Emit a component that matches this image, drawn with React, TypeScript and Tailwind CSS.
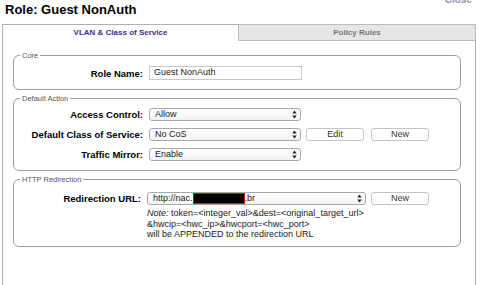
import type { ReactNode } from "react";

function Arrows() {
  return (
    <svg width="5" height="9" viewBox="0 0 5 9" className="shrink-0">
      <path d="M0.3 3.6 L2.5 0.6 L4.7 3.6 Z" fill="#222" />
      <path d="M0.3 5.4 L2.5 8.4 L4.7 5.4 Z" fill="#222" />
    </svg>
  );
}

function Select({ children, className = "w-[152px]" }: { children: ReactNode; className?: string }) {
  return (
    <div
      className={`${className} h-[13px] flex items-center justify-between border border-[#a8a8a8] rounded-[3px] bg-gradient-to-b from-white to-[#f3f3f3] pl-[5px] pr-[3px] text-[9px] leading-[11px] text-[#222]`}
    >
      <span className="flex items-center whitespace-nowrap">{children}</span>
      <Arrows />
    </div>
  );
}

function Button({ label }: { label: string }) {
  return (
    <div className="w-[58px] h-[13px] flex items-center justify-center border border-[#c4c4c4] rounded-[3px] bg-white text-[9px] text-[#333]">
      {label}
    </div>
  );
}

function Label({ children }: { children: ReactNode }) {
  return <div className="text-right font-bold text-[9.5px] leading-[13px] text-black whitespace-nowrap">{children}</div>;
}

function Group({ title, className = "", children }: { title: string; className?: string; children: ReactNode }) {
  return (
    <fieldset className={`border border-[#9c9c9c] rounded-[6px] ${className}`}>
      <legend className="ml-[6px] px-[2px] text-[7.5px] leading-[9px] text-[#555]">{title}</legend>
      {children}
    </fieldset>
  );
}

export default function App() {
  return (
    <div className="w-[490px] h-[285px] overflow-hidden bg-white flex flex-col font-['Liberation_Sans',Arial,sans-serif]">
      <div className="flex justify-between pl-[5px] pt-[2px] pr-[18px]">
        <h1 className="text-[13px] leading-[16px] font-bold text-black">Role: Guest NonAuth</h1>
        <span className="-mt-[7px] text-[10px] leading-[10px] font-bold text-[#8d95ad]">Close</span>
      </div>

      <div className="mt-[6px] ml-[2px] w-[474px] flex">
        <div className="w-[236px] h-[17px] border-t border-l border-[#b0b0b0] bg-white flex items-center justify-center text-[8px] font-bold text-[#3f2b8f]">
          VLAN &amp; Class of Service
        </div>
        <div className="flex-1 h-[17px] border border-[#bcbcbc] bg-[#e6e6e6] flex items-center justify-center text-[8px] font-bold text-[#777]">
          Policy Rules
        </div>
      </div>

      <div className="ml-[2px] w-[474px] flex-1 border-l border-r border-[#b0b0b0] pl-[10px] pr-[14px] pt-[10px] flex flex-col gap-[4px]">
        <Group title="Core" className="pt-[6px] pb-[9px]">
          <div className="grid grid-cols-[129px_1fr] gap-x-[6px] items-center">
            <Label>Role Name:</Label>
            <div className="w-[153px] h-[14px] border border-[#c8c8c8] flex items-center pl-[4px] text-[9px] text-[#222]">
              Guest NonAuth
            </div>
          </div>
        </Group>

        <Group title="Default Action" className="pt-[5px] pb-[9px]">
          <div className="grid grid-cols-[129px_1fr] gap-x-[6px] gap-y-[7px] items-center">
            <Label>Access Control:</Label>
            <Select>Allow</Select>
            <Label>Default Class of Service:</Label>
            <div className="flex items-center">
              <Select>No CoS</Select>
              <div className="ml-[5px]">
                <Button label="Edit" />
              </div>
              <div className="ml-[7px]">
                <Button label="New" />
              </div>
            </div>
            <Label>Traffic Mirror:</Label>
            <Select>Enable</Select>
          </div>
        </Group>

        <Group title="HTTP Redirection" className="pt-[8px] pb-[6px]">
          <div className="grid grid-cols-[127px_1fr] gap-x-[6px] items-center">
            <Label>Redirection URL:</Label>
            <div className="flex items-center">
              <Select className="w-[219px]">
                http://nac.
                <span className="inline-block w-[52px] h-[11px] bg-black border border-[#e01010]" />
                .br
              </Select>
              <div className="ml-[5px]">
                <Button label="New" />
              </div>
            </div>
            <div className="col-start-2 mt-[3px] text-[9px] leading-[10.5px] text-[#222]">
              <div>
                <i>Note:</i> token=&lt;integer_val&gt;&amp;dest=&lt;original_target_url&gt;
              </div>
              <div>&amp;hwcip=&lt;hwc_ip&gt;&amp;hwcport=&lt;hwc_port&gt;</div>
              <div>will be APPENDED to the redirection URL</div>
            </div>
          </div>
        </Group>
      </div>
    </div>
  );
}
